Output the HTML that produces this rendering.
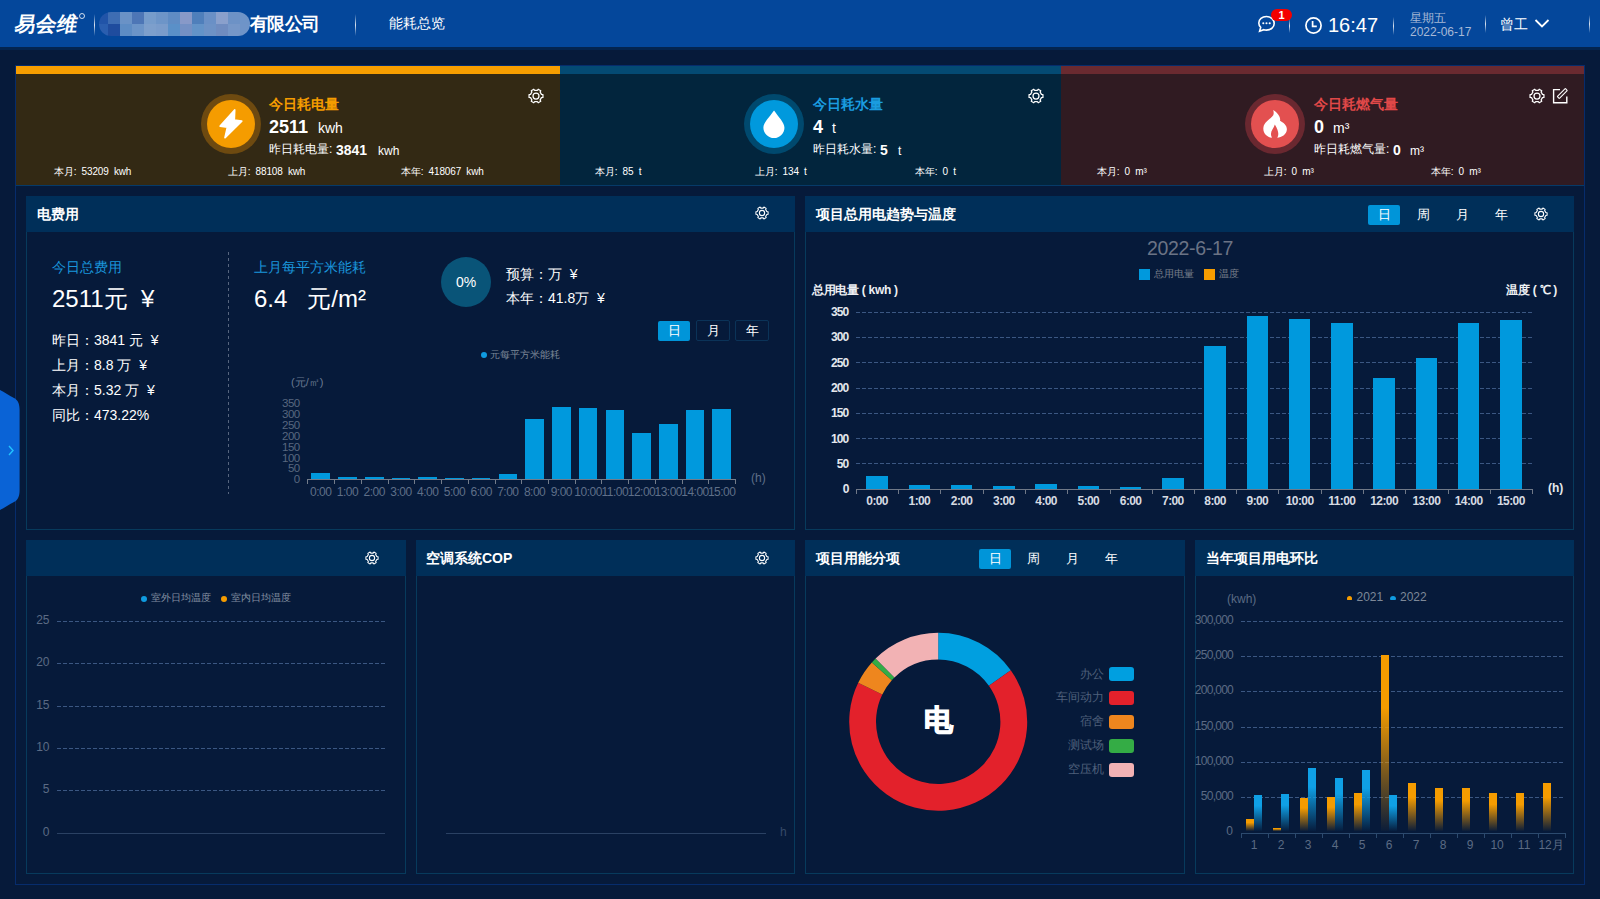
<!DOCTYPE html>
<html><head><meta charset="utf-8">
<style>
*{margin:0;padding:0;box-sizing:border-box}
html,body{width:1600px;height:899px;overflow:hidden;background:#061a3a;font-family:"Liberation Sans",sans-serif;color:#fff}
.a{position:absolute;white-space:nowrap}
.hdr{left:0;top:0;width:1600px;height:47px;background:#04479b}
.strip{left:0;top:47px;width:1600px;height:3px;background:#03244f}
.sep{width:1px;background:linear-gradient(to bottom,rgba(255,255,255,0),rgba(255,255,255,.85),rgba(255,255,255,0))}
.box{left:15px;top:65px;width:1570px;height:820px;border:1px solid #062c6c}
.card{top:66px;height:119px}
.bar{left:0;top:0;width:100%;height:8px}
.cbot{left:16px;top:185px;width:1568px;height:1px;background:#063a68}
.pnl{border:1px solid #073a5c;border-top:none}
.ph{left:-1px;top:0;height:36px;background:#002f59}
.pt{font-size:14px;font-weight:bold;color:#fff}
.g{color:#8390a3}
</style></head><body>
<!-- header -->
<div class="a hdr"></div>
<div class="a strip"></div>
<div class="a" style="left:15px;top:12px;font-size:20.5px;line-height:24px;font-weight:bold;color:#fff;letter-spacing:0px;transform:skewX(-10deg)">易会维</div>
<div class="a" style="left:79px;top:13px;width:6px;height:6px;border:1px solid rgba(255,255,255,.8);border-radius:50%"></div>
<div class="a sep" style="left:94px;top:14px;height:22px"></div>
<div class="a" style="left:99px;top:12px;width:151px;height:24px;border-radius:12px;overflow:hidden">
 <div style="display:grid;grid-template-columns:9px repeat(12,12px) 10px;grid-template-rows:12px 12px">
  <i style="background:#2154a8"></i><i style="background:#3e6db3"></i><i style="background:#6a92c6"></i><i style="background:#4d76b6"></i><i style="background:#769ccb"></i><i style="background:#6d95c8"></i><i style="background:#5f8cc4"></i><i style="background:#8899c8"></i><i style="background:#4f7fbb"></i><i style="background:#6a90c6"></i><i style="background:#8aa0cc"></i><i style="background:#6d92c6"></i><i style="background:#6e94c8"></i><i style="background:#6e94c8"></i>
  <i style="background:#2a5eaf"></i><i style="background:#1f4c9e"></i><i style="background:#5d8cc4"></i><i style="background:#6b94c8"></i><i style="background:#7d9fcc"></i><i style="background:#7a9ccb"></i><i style="background:#5a90c8"></i><i style="background:#7490c4"></i><i style="background:#6393c8"></i><i style="background:#6d92c6"></i><i style="background:#6f8cc0"></i><i style="background:#7697c8"></i><i style="background:#6f94c8"></i><i style="background:#6f94c8"></i>
 </div>
</div>
<div class="a" style="left:250px;top:12px;font-size:18px;line-height:24px;font-weight:bold;color:#fff;letter-spacing:-0.6px">有限公司</div>
<div class="a sep" style="left:355px;top:14px;height:22px"></div>
<div class="a" style="left:389px;top:14px;font-size:14px;line-height:18px;color:#fff">能耗总览</div>

<!-- header right -->
<svg class="a" style="left:1257px;top:15px" width="19" height="18" viewBox="0 0 19 18"><path d="M9.5 1.5C5 1.5 1.8 4.3 1.8 8c0 1.7.7 3.2 1.9 4.3L2.6 16.3l4.2-1.6c.9.3 1.8.4 2.7.4 4.5 0 7.7-2.9 7.7-6.6S14 1.5 9.5 1.5z" fill="none" stroke="#fff" stroke-width="1.6"/><circle cx="6.3" cy="8.2" r="1.05" fill="#fff"/><circle cx="9.5" cy="8.2" r="1.05" fill="#fff"/><circle cx="12.7" cy="8.2" r="1.05" fill="#fff"/></svg>
<div class="a" style="left:1271px;top:9px;width:21px;height:12px;border-radius:6px;background:#f40000;font-size:11px;line-height:12px;font-weight:bold;text-align:center;color:#fff">1</div>
<div class="a sep" style="left:1289px;top:19px;height:14px"></div>
<svg class="a" style="left:1304px;top:16px" width="19" height="19" viewBox="0 0 19 19"><circle cx="9.5" cy="9.5" r="7.6" fill="none" stroke="#fff" stroke-width="1.7"/><path d="M8.6 5v5.3h4.2" fill="none" stroke="#fff" stroke-width="1.7"/></svg>
<div class="a" style="left:1328px;top:13px;font-size:20px;line-height:24px;color:#fff">16:47</div>
<div class="a sep" style="left:1393px;top:17px;height:18px"></div>
<div class="a" style="left:1410px;top:11px;font-size:12px;line-height:14px;color:#a7b9d6">星期五</div>
<div class="a" style="left:1410px;top:26px;font-size:12px;line-height:13px;color:#a7b9d6">2022-06-17</div>
<div class="a sep" style="left:1485px;top:15px;height:18px"></div>
<div class="a" style="left:1500px;top:16px;font-size:14px;line-height:17px;color:#fff">曾工</div>
<svg class="a" style="left:1534px;top:18px" width="16" height="11" viewBox="0 0 16 11"><path d="M1.5 2l6.5 6.5 6.5-6.5" fill="none" stroke="#fff" stroke-width="1.8"/></svg>
<div class="a sep" style="left:1589px;top:15px;height:18px"></div>

<!-- container -->
<div class="a box"></div>

<!-- cards -->
<div class="a card" style="left:16px;width:544px;background:#332914"><div class="a bar" style="background:#f79e00"></div></div>
<div class="a card" style="left:560px;width:501px;background:#02253d"><div class="a bar" style="background:#044a73"></div></div>
<div class="a card" style="left:1061px;width:523px;background:#301b22"><div class="a bar" style="background:#6a2a30"></div></div>
<div class="a cbot"></div>
<svg width="0" height="0" style="position:absolute"><defs>
<symbol id="gear" viewBox="0 0 16 16"><path d="M9.30,2.45 L10.19,1.25 L12.75,2.72 L12.16,4.10 L13.46,6.35 L14.94,6.52 L14.94,9.48 L13.46,9.65 L12.16,11.90 L12.75,13.28 L10.19,14.75 L9.30,13.55 L6.70,13.55 L5.81,14.75 L3.25,13.28 L3.84,11.90 L2.54,9.65 L1.06,9.48 L1.06,6.52 L2.54,6.35 L3.84,4.10 L3.25,2.72 L5.81,1.25 L6.70,2.45Z" fill="none" stroke="#fff" stroke-width="1.25" stroke-linejoin="round"/><circle cx="8" cy="8" r="3" fill="none" stroke="#fff" stroke-width="1.25"/></symbol>
</defs></svg>

<!-- card 1 -->
<div class="a" style="left:201px;top:94px;width:60px;height:60px;border-radius:50%;background:#6e4a10"></div>
<div class="a" style="left:207px;top:100px;width:48px;height:48px;border-radius:50%;background:#f59c00"></div>
<svg class="a" style="left:195px;top:88px" width="70" height="72" viewBox="0 0 874 899"><path d="M495,275 L490,400 L583,415 L375,620 L405,490 L315,475 Z" fill="#fff" stroke="#fff" stroke-width="22" stroke-linejoin="round"/></svg>
<div class="a" style="left:269px;top:96px;font-size:14px;line-height:16px;font-weight:bold;color:#f59c00">今日耗电量</div>
<div class="a" style="left:269px;top:117px;font-size:18px;line-height:20px;font-weight:bold">2511</div>
<div class="a" style="left:318px;top:120px;font-size:14px;line-height:16px">kwh</div>
<div class="a" style="left:269px;top:142px;font-size:12px;line-height:14px">昨日耗电量:</div>
<div class="a" style="left:336px;top:142px;font-size:14px;line-height:16px;font-weight:bold">3841</div>
<div class="a" style="left:378px;top:144px;font-size:12px;line-height:14px">kwh</div>
<div class="a" style="left:54px;top:166px;font-size:10px;line-height:12px;letter-spacing:-0.15px">本月:&nbsp; 53209 &nbsp;kwh</div>
<div class="a" style="left:228px;top:166px;font-size:10px;line-height:12px;letter-spacing:-0.15px">上月:&nbsp; 88108 &nbsp;kwh</div>
<div class="a" style="left:401px;top:166px;font-size:10px;line-height:12px;letter-spacing:-0.15px">本年:&nbsp; 418067 &nbsp;kwh</div>
<svg class="a" style="left:528px;top:88px" width="16" height="16"><use href="#gear"/></svg>

<!-- card 2 -->
<div class="a" style="left:744px;top:94px;width:60px;height:60px;border-radius:50%;background:#00496e"></div>
<div class="a" style="left:750px;top:100px;width:48px;height:48px;border-radius:50%;background:#0099dd"></div>
<svg class="a" style="left:740px;top:88px" width="70" height="72" viewBox="0 0 874 899"><path d="M425,280 C480,360 555,430 555,495 C555,565 495,625 425,625 C355,625 292,565 292,495 C292,430 370,360 425,280 Z" fill="#fff"/></svg>
<div class="a" style="left:813px;top:96px;font-size:14px;line-height:16px;font-weight:bold;color:#1a9ce0">今日耗水量</div>
<div class="a" style="left:813px;top:117px;font-size:18px;line-height:20px;font-weight:bold">4</div>
<div class="a" style="left:832px;top:120px;font-size:14px;line-height:16px">t</div>
<div class="a" style="left:813px;top:142px;font-size:12px;line-height:14px">昨日耗水量:</div>
<div class="a" style="left:880px;top:142px;font-size:14px;line-height:16px;font-weight:bold">5</div>
<div class="a" style="left:898px;top:144px;font-size:12px;line-height:14px">t</div>
<div class="a" style="left:595px;top:166px;font-size:10px;line-height:12px;letter-spacing:-0.15px">本月:&nbsp; 85 &nbsp;t</div>
<div class="a" style="left:755px;top:166px;font-size:10px;line-height:12px;letter-spacing:-0.15px">上月:&nbsp; 134 &nbsp;t</div>
<div class="a" style="left:915px;top:166px;font-size:10px;line-height:12px;letter-spacing:-0.15px">本年:&nbsp; 0 &nbsp;t</div>
<svg class="a" style="left:1028px;top:88px" width="16" height="16"><use href="#gear"/></svg>

<!-- card 3 -->
<div class="a" style="left:1245px;top:94px;width:60px;height:60px;border-radius:50%;background:#6a2830"></div>
<div class="a" style="left:1251px;top:100px;width:48px;height:48px;border-radius:50%;background:#e35050"></div>
<svg class="a" style="left:1240px;top:88px" width="70" height="72" viewBox="0 0 874 899"><path d="M415,275 C470,310 510,360 500,410 C540,430 590,470 585,520 C580,580 520,615 465,622 C490,580 480,530 435,455 C420,510 360,550 400,622 C330,610 285,560 292,495 C300,420 380,390 415,340 C425,320 420,295 415,275 Z" fill="#fff"/></svg>
<div class="a" style="left:1314px;top:96px;font-size:14px;line-height:16px;font-weight:bold;color:#e04848">今日耗燃气量</div>
<div class="a" style="left:1314px;top:117px;font-size:18px;line-height:20px;font-weight:bold">0</div>
<div class="a" style="left:1333px;top:120px;font-size:14px;line-height:16px">m³</div>
<div class="a" style="left:1314px;top:142px;font-size:12px;line-height:14px">昨日耗燃气量:</div>
<div class="a" style="left:1393px;top:142px;font-size:14px;line-height:16px;font-weight:bold">0</div>
<div class="a" style="left:1410px;top:144px;font-size:12px;line-height:14px">m³</div>
<div class="a" style="left:1097px;top:166px;font-size:10px;line-height:12px;letter-spacing:-0.15px">本月:&nbsp; 0 &nbsp;m³</div>
<div class="a" style="left:1264px;top:166px;font-size:10px;line-height:12px;letter-spacing:-0.15px">上月:&nbsp; 0 &nbsp;m³</div>
<div class="a" style="left:1431px;top:166px;font-size:10px;line-height:12px;letter-spacing:-0.15px">本年:&nbsp; 0 &nbsp;m³</div>
<svg class="a" style="left:1529px;top:88px" width="16" height="16"><use href="#gear"/></svg>
<svg class="a" style="left:1552px;top:88px" width="16" height="16" viewBox="0 0 16 16"><path d="M8 1.6H1.6v13.2h13.2V8.4" fill="none" stroke="#fff" stroke-width="1.4"/><rect x="4.6" y="4.1" width="11.4" height="2.8" rx="0.6" transform="rotate(-45 10.3 5.5)" fill="none" stroke="#fff" stroke-width="1.1"/></svg>

<!-- panels -->
<div class="a pnl" style="left:26px;top:196px;width:769px;height:334px"><div class="a ph" style="width:769px"></div></div>
<div class="a pnl" style="left:805px;top:196px;width:769px;height:334px"><div class="a ph" style="width:769px"></div></div>
<div class="a pnl" style="left:26px;top:540px;width:380px;height:334px"><div class="a ph" style="width:380px"></div></div>
<div class="a pnl" style="left:416px;top:540px;width:379px;height:334px"><div class="a ph" style="width:379px"></div></div>
<div class="a pnl" style="left:805px;top:540px;width:380px;height:334px"><div class="a ph" style="width:380px"></div></div>
<div class="a pnl" style="left:1195px;top:540px;width:379px;height:334px"><div class="a ph" style="width:379px"></div></div>

<!--P1-->
<div class="a" style="left:37px;top:206px;font-size:14px;line-height:16px;color:#fff;font-weight:bold">电费用</div>
<svg class="a" style="left:755px;top:206px" width="14" height="14"><use href="#gear"/></svg>
<div class="a" style="left:52px;top:259px;font-size:14px;line-height:16px;color:#1a96dc;">今日总费用</div>
<div class="a" style="left:52px;top:285px;font-size:24px;line-height:28px;color:#fff;">2511元 &nbsp;¥</div>
<div class="a" style="left:52px;top:332px;font-size:14px;line-height:16px;color:#fff;">昨日：3841 元 &nbsp;¥</div>
<div class="a" style="left:52px;top:357px;font-size:14px;line-height:16px;color:#fff;">上月：8.8 万 &nbsp;¥</div>
<div class="a" style="left:52px;top:382px;font-size:14px;line-height:16px;color:#fff;">本月：5.32 万 &nbsp;¥</div>
<div class="a" style="left:52px;top:407px;font-size:14px;line-height:16px;color:#fff;">同比：473.22%</div>
<div class="a" style="left:228px;top:252px;width:1px;height:242px;background:repeating-linear-gradient(to bottom,#56657e 0 3px,transparent 3px 6px)"></div>
<div class="a" style="left:254px;top:259px;font-size:14px;line-height:16px;color:#1a96dc;">上月每平方米能耗</div>
<div class="a" style="left:254px;top:285px;font-size:24px;line-height:28px;color:#fff;">6.4 &nbsp; 元/m²</div>
<div class="a" style="left:441px;top:257px;width:50px;height:50px;border-radius:50%;background:#095478"></div>
<div class="a" style="left:366px;width:200px;text-align:center;top:274px;font-size:14px;line-height:16px;color:#fff;">0%</div>
<div class="a" style="left:506px;top:266px;font-size:14px;line-height:16px;color:#fff;">预算：万 &nbsp;¥</div>
<div class="a" style="left:506px;top:290px;font-size:14px;line-height:16px;color:#fff;">本年：41.8万 &nbsp;¥</div>
<div class="a" style="left:658px;top:321px;width:32px;height:20px;background:#0095d9;border-radius:2px;font-size:13px;line-height:20px;text-align:center">日</div>
<div class="a" style="left:696px;top:320px;width:34px;height:21px;border:1px solid #0b3358;border-radius:2px;font-size:13px;line-height:19px;text-align:center">月</div>
<div class="a" style="left:735px;top:320px;width:34px;height:21px;border:1px solid #0b3358;border-radius:2px;font-size:13px;line-height:19px;text-align:center">年</div>
<!--/P1-->
<!--C1-->
<div class="a" style="left:291px;top:376px;font-size:11px;line-height:13px;color:#6b7a92;">(元/㎡)</div>
<div class="a" style="left:481px;top:352px;width:6px;height:6px;border-radius:50%;background:#0f9be0"></div>
<div class="a" style="left:490px;top:348px;font-size:10px;line-height:13px;color:#7d8898;">元每平方米能耗</div>
<div class="a" style="left:99.5px;width:200px;text-align:right;top:397.3px;font-size:11.5px;line-height:13px;color:#58677f;letter-spacing:-0.6px">350</div>
<div class="a" style="left:99.5px;width:200px;text-align:right;top:408.15714285714284px;font-size:11.5px;line-height:13px;color:#58677f;letter-spacing:-0.6px">300</div>
<div class="a" style="left:99.5px;width:200px;text-align:right;top:419.01428571428573px;font-size:11.5px;line-height:13px;color:#58677f;letter-spacing:-0.6px">250</div>
<div class="a" style="left:99.5px;width:200px;text-align:right;top:429.87142857142857px;font-size:11.5px;line-height:13px;color:#58677f;letter-spacing:-0.6px">200</div>
<div class="a" style="left:99.5px;width:200px;text-align:right;top:440.72857142857146px;font-size:11.5px;line-height:13px;color:#58677f;letter-spacing:-0.6px">150</div>
<div class="a" style="left:99.5px;width:200px;text-align:right;top:451.5857142857143px;font-size:11.5px;line-height:13px;color:#58677f;letter-spacing:-0.6px">100</div>
<div class="a" style="left:99.5px;width:200px;text-align:right;top:462.4428571428572px;font-size:11.5px;line-height:13px;color:#58677f;letter-spacing:-0.6px">50</div>
<div class="a" style="left:99.5px;width:200px;text-align:right;top:473.3px;font-size:11.5px;line-height:13px;color:#58677f;letter-spacing:-0.6px">0</div>
<div class="a" style="left:307.40px;top:479.00px;width:427.68px;height:1.00px;background:#737c8a;"></div>
<div class="a" style="left:307.00px;top:479.00px;width:1.00px;height:5.00px;background:#737c8a;"></div>
<div class="a" style="left:334.00px;top:479.00px;width:1.00px;height:5.00px;background:#737c8a;"></div>
<div class="a" style="left:361.00px;top:479.00px;width:1.00px;height:5.00px;background:#737c8a;"></div>
<div class="a" style="left:388.00px;top:479.00px;width:1.00px;height:5.00px;background:#737c8a;"></div>
<div class="a" style="left:414.00px;top:479.00px;width:1.00px;height:5.00px;background:#737c8a;"></div>
<div class="a" style="left:441.00px;top:479.00px;width:1.00px;height:5.00px;background:#737c8a;"></div>
<div class="a" style="left:468.00px;top:479.00px;width:1.00px;height:5.00px;background:#737c8a;"></div>
<div class="a" style="left:495.00px;top:479.00px;width:1.00px;height:5.00px;background:#737c8a;"></div>
<div class="a" style="left:521.00px;top:479.00px;width:1.00px;height:5.00px;background:#737c8a;"></div>
<div class="a" style="left:548.00px;top:479.00px;width:1.00px;height:5.00px;background:#737c8a;"></div>
<div class="a" style="left:575.00px;top:479.00px;width:1.00px;height:5.00px;background:#737c8a;"></div>
<div class="a" style="left:601.00px;top:479.00px;width:1.00px;height:5.00px;background:#737c8a;"></div>
<div class="a" style="left:628.00px;top:479.00px;width:1.00px;height:5.00px;background:#737c8a;"></div>
<div class="a" style="left:655.00px;top:479.00px;width:1.00px;height:5.00px;background:#737c8a;"></div>
<div class="a" style="left:682.00px;top:479.00px;width:1.00px;height:5.00px;background:#737c8a;"></div>
<div class="a" style="left:708.00px;top:479.00px;width:1.00px;height:5.00px;background:#737c8a;"></div>
<div class="a" style="left:735.00px;top:479.00px;width:1.00px;height:5.00px;background:#737c8a;"></div>
<div class="a" style="left:311.46px;top:473.00px;width:18.60px;height:6.00px;background:#0099dd;"></div>
<div class="a" style="left:220.765px;width:200px;text-align:center;top:484.5px;font-size:12px;line-height:14px;color:#5f6f88;letter-spacing:-0.5px">0:00</div>
<div class="a" style="left:338.19px;top:476.80px;width:18.60px;height:2.20px;background:#0099dd;"></div>
<div class="a" style="left:247.495px;width:200px;text-align:center;top:484.5px;font-size:12px;line-height:14px;color:#5f6f88;letter-spacing:-0.5px">1:00</div>
<div class="a" style="left:364.92px;top:476.80px;width:18.60px;height:2.20px;background:#0099dd;"></div>
<div class="a" style="left:274.22499999999997px;width:200px;text-align:center;top:484.5px;font-size:12px;line-height:14px;color:#5f6f88;letter-spacing:-0.5px">2:00</div>
<div class="a" style="left:391.65px;top:477.60px;width:18.60px;height:1.40px;background:#0099dd;"></div>
<div class="a" style="left:300.955px;width:200px;text-align:center;top:484.5px;font-size:12px;line-height:14px;color:#5f6f88;letter-spacing:-0.5px">3:00</div>
<div class="a" style="left:418.38px;top:476.80px;width:18.60px;height:2.20px;background:#0099dd;"></div>
<div class="a" style="left:327.68499999999995px;width:200px;text-align:center;top:484.5px;font-size:12px;line-height:14px;color:#5f6f88;letter-spacing:-0.5px">4:00</div>
<div class="a" style="left:445.11px;top:477.60px;width:18.60px;height:1.40px;background:#0099dd;"></div>
<div class="a" style="left:354.41499999999996px;width:200px;text-align:center;top:484.5px;font-size:12px;line-height:14px;color:#5f6f88;letter-spacing:-0.5px">5:00</div>
<div class="a" style="left:471.84px;top:477.90px;width:18.60px;height:1.10px;background:#0099dd;"></div>
<div class="a" style="left:381.145px;width:200px;text-align:center;top:484.5px;font-size:12px;line-height:14px;color:#5f6f88;letter-spacing:-0.5px">6:00</div>
<div class="a" style="left:498.57px;top:474.30px;width:18.60px;height:4.70px;background:#0099dd;"></div>
<div class="a" style="left:407.875px;width:200px;text-align:center;top:484.5px;font-size:12px;line-height:14px;color:#5f6f88;letter-spacing:-0.5px">7:00</div>
<div class="a" style="left:525.31px;top:419.00px;width:18.60px;height:60.00px;background:#0099dd;"></div>
<div class="a" style="left:434.605px;width:200px;text-align:center;top:484.5px;font-size:12px;line-height:14px;color:#5f6f88;letter-spacing:-0.5px">8:00</div>
<div class="a" style="left:552.04px;top:407.00px;width:18.60px;height:72.00px;background:#0099dd;"></div>
<div class="a" style="left:461.33500000000004px;width:200px;text-align:center;top:484.5px;font-size:12px;line-height:14px;color:#5f6f88;letter-spacing:-0.5px">9:00</div>
<div class="a" style="left:578.77px;top:408.00px;width:18.60px;height:71.00px;background:#0099dd;"></div>
<div class="a" style="left:488.06500000000005px;width:200px;text-align:center;top:484.5px;font-size:12px;line-height:14px;color:#5f6f88;letter-spacing:-0.5px">10:00</div>
<div class="a" style="left:605.50px;top:409.70px;width:18.60px;height:69.30px;background:#0099dd;"></div>
<div class="a" style="left:514.795px;width:200px;text-align:center;top:484.5px;font-size:12px;line-height:14px;color:#5f6f88;letter-spacing:-0.5px">11:00</div>
<div class="a" style="left:632.23px;top:432.60px;width:18.60px;height:46.40px;background:#0099dd;"></div>
<div class="a" style="left:541.525px;width:200px;text-align:center;top:484.5px;font-size:12px;line-height:14px;color:#5f6f88;letter-spacing:-0.5px">12:00</div>
<div class="a" style="left:658.96px;top:424.00px;width:18.60px;height:55.00px;background:#0099dd;"></div>
<div class="a" style="left:568.255px;width:200px;text-align:center;top:484.5px;font-size:12px;line-height:14px;color:#5f6f88;letter-spacing:-0.5px">13:00</div>
<div class="a" style="left:685.68px;top:409.70px;width:18.60px;height:69.30px;background:#0099dd;"></div>
<div class="a" style="left:594.9849999999999px;width:200px;text-align:center;top:484.5px;font-size:12px;line-height:14px;color:#5f6f88;letter-spacing:-0.5px">14:00</div>
<div class="a" style="left:712.41px;top:408.50px;width:18.60px;height:70.50px;background:#0099dd;"></div>
<div class="a" style="left:621.7149999999999px;width:200px;text-align:center;top:484.5px;font-size:12px;line-height:14px;color:#5f6f88;letter-spacing:-0.5px">15:00</div>
<div class="a" style="left:751px;top:471px;font-size:12px;line-height:14px;color:#5f6f88;">(h)</div>
<!--/C1-->
<!--C2-->
<div class="a" style="left:816px;top:206px;font-size:14px;line-height:16px;color:#fff;font-weight:bold">项目总用电趋势与温度</div>
<div class="a" style="left:1368px;top:205px;width:32px;height:20px;background:#0095d9;border-radius:2px;font-size:13px;line-height:20px;text-align:center">日</div>
<div class="a" style="left:1323px;width:200px;text-align:center;top:205px;font-size:13px;line-height:20px;color:#fff;">周</div>
<div class="a" style="left:1362px;width:200px;text-align:center;top:205px;font-size:13px;line-height:20px;color:#fff;">月</div>
<div class="a" style="left:1401px;width:200px;text-align:center;top:205px;font-size:13px;line-height:20px;color:#fff;">年</div>
<svg class="a" style="left:1534px;top:207px" width="14" height="14"><use href="#gear"/></svg>
<div class="a" style="left:1090px;width:200px;text-align:center;top:237px;font-size:19.5px;line-height:22px;color:#6b7385;letter-spacing:-0.3px">2022-6-17</div>
<div class="a" style="left:1139.00px;top:269.00px;width:11.00px;height:11.00px;background:#0099dd;"></div>
<div class="a" style="left:1154px;top:267px;font-size:10px;line-height:13px;color:#7a808c;">总用电量</div>
<div class="a" style="left:1204.00px;top:269.00px;width:11.00px;height:11.00px;background:#f59c00;"></div>
<div class="a" style="left:1219px;top:267px;font-size:10px;line-height:13px;color:#7a808c;">温度</div>
<div class="a" style="left:812px;top:283px;font-size:12px;line-height:14px;color:#eef0f3;font-weight:bold;letter-spacing:-0.3px">总用电量 ( kwh )</div>
<div class="a" style="left:1357px;width:200px;text-align:right;top:283px;font-size:12px;line-height:14px;color:#eef0f3;font-weight:bold;letter-spacing:-0.3px">温度 ( ℃ )</div>
<div class="a" style="left:856px;top:312px;width:676px;height:1px;background:repeating-linear-gradient(to right,#3b5782 0 4px,transparent 4px 6px)"></div>
<div class="a" style="left:856px;top:337px;width:676px;height:1px;background:repeating-linear-gradient(to right,#3b5782 0 4px,transparent 4px 6px)"></div>
<div class="a" style="left:856px;top:362px;width:676px;height:1px;background:repeating-linear-gradient(to right,#3b5782 0 4px,transparent 4px 6px)"></div>
<div class="a" style="left:856px;top:388px;width:676px;height:1px;background:repeating-linear-gradient(to right,#3b5782 0 4px,transparent 4px 6px)"></div>
<div class="a" style="left:856px;top:413px;width:676px;height:1px;background:repeating-linear-gradient(to right,#3b5782 0 4px,transparent 4px 6px)"></div>
<div class="a" style="left:856px;top:438px;width:676px;height:1px;background:repeating-linear-gradient(to right,#3b5782 0 4px,transparent 4px 6px)"></div>
<div class="a" style="left:856px;top:463px;width:676px;height:1px;background:repeating-linear-gradient(to right,#3b5782 0 4px,transparent 4px 6px)"></div>
<div class="a" style="left:648.5px;width:200px;text-align:right;top:304.8px;font-size:12px;line-height:14px;color:#e3e7ec;font-weight:bold;letter-spacing:-0.8px">350</div>
<div class="a" style="left:648.5px;width:200px;text-align:right;top:330.15714285714284px;font-size:12px;line-height:14px;color:#e3e7ec;font-weight:bold;letter-spacing:-0.8px">300</div>
<div class="a" style="left:648.5px;width:200px;text-align:right;top:355.51428571428573px;font-size:12px;line-height:14px;color:#e3e7ec;font-weight:bold;letter-spacing:-0.8px">250</div>
<div class="a" style="left:648.5px;width:200px;text-align:right;top:380.8714285714286px;font-size:12px;line-height:14px;color:#e3e7ec;font-weight:bold;letter-spacing:-0.8px">200</div>
<div class="a" style="left:648.5px;width:200px;text-align:right;top:406.22857142857146px;font-size:12px;line-height:14px;color:#e3e7ec;font-weight:bold;letter-spacing:-0.8px">150</div>
<div class="a" style="left:648.5px;width:200px;text-align:right;top:431.5857142857143px;font-size:12px;line-height:14px;color:#e3e7ec;font-weight:bold;letter-spacing:-0.8px">100</div>
<div class="a" style="left:648.5px;width:200px;text-align:right;top:456.9428571428572px;font-size:12px;line-height:14px;color:#e3e7ec;font-weight:bold;letter-spacing:-0.8px">50</div>
<div class="a" style="left:648.5px;width:200px;text-align:right;top:482.3px;font-size:12px;line-height:14px;color:#e3e7ec;font-weight:bold;letter-spacing:-0.8px">0</div>
<div class="a" style="left:856.00px;top:489.00px;width:676.00px;height:1.00px;background:#6f7887;"></div>
<div class="a" style="left:856.00px;top:489.00px;width:1.00px;height:5.00px;background:#6f7887;"></div>
<div class="a" style="left:898.00px;top:489.00px;width:1.00px;height:5.00px;background:#6f7887;"></div>
<div class="a" style="left:940.00px;top:489.00px;width:1.00px;height:5.00px;background:#6f7887;"></div>
<div class="a" style="left:983.00px;top:489.00px;width:1.00px;height:5.00px;background:#6f7887;"></div>
<div class="a" style="left:1025.00px;top:489.00px;width:1.00px;height:5.00px;background:#6f7887;"></div>
<div class="a" style="left:1067.00px;top:489.00px;width:1.00px;height:5.00px;background:#6f7887;"></div>
<div class="a" style="left:1110.00px;top:489.00px;width:1.00px;height:5.00px;background:#6f7887;"></div>
<div class="a" style="left:1152.00px;top:489.00px;width:1.00px;height:5.00px;background:#6f7887;"></div>
<div class="a" style="left:1194.00px;top:489.00px;width:1.00px;height:5.00px;background:#6f7887;"></div>
<div class="a" style="left:1236.00px;top:489.00px;width:1.00px;height:5.00px;background:#6f7887;"></div>
<div class="a" style="left:1278.00px;top:489.00px;width:1.00px;height:5.00px;background:#6f7887;"></div>
<div class="a" style="left:1321.00px;top:489.00px;width:1.00px;height:5.00px;background:#6f7887;"></div>
<div class="a" style="left:1363.00px;top:489.00px;width:1.00px;height:5.00px;background:#6f7887;"></div>
<div class="a" style="left:1405.00px;top:489.00px;width:1.00px;height:5.00px;background:#6f7887;"></div>
<div class="a" style="left:1448.00px;top:489.00px;width:1.00px;height:5.00px;background:#6f7887;"></div>
<div class="a" style="left:1490.00px;top:489.00px;width:1.00px;height:5.00px;background:#6f7887;"></div>
<div class="a" style="left:1532.00px;top:489.00px;width:1.00px;height:5.00px;background:#6f7887;"></div>
<div class="a" style="left:866.48px;top:475.75px;width:21.30px;height:13.25px;background:#0099dd;"></div>
<div class="a" style="left:777.125px;width:200px;text-align:center;top:494px;font-size:12px;line-height:14px;color:#d6dbe2;font-weight:bold;letter-spacing:-0.6px">0:00</div>
<div class="a" style="left:908.73px;top:485.20px;width:21.30px;height:3.80px;background:#0099dd;"></div>
<div class="a" style="left:819.375px;width:200px;text-align:center;top:494px;font-size:12px;line-height:14px;color:#d6dbe2;font-weight:bold;letter-spacing:-0.6px">1:00</div>
<div class="a" style="left:950.98px;top:485.20px;width:21.30px;height:3.80px;background:#0099dd;"></div>
<div class="a" style="left:861.625px;width:200px;text-align:center;top:494px;font-size:12px;line-height:14px;color:#d6dbe2;font-weight:bold;letter-spacing:-0.6px">2:00</div>
<div class="a" style="left:993.23px;top:486.00px;width:21.30px;height:3.00px;background:#0099dd;"></div>
<div class="a" style="left:903.875px;width:200px;text-align:center;top:494px;font-size:12px;line-height:14px;color:#d6dbe2;font-weight:bold;letter-spacing:-0.6px">3:00</div>
<div class="a" style="left:1035.47px;top:484.00px;width:21.30px;height:5.00px;background:#0099dd;"></div>
<div class="a" style="left:946.125px;width:200px;text-align:center;top:494px;font-size:12px;line-height:14px;color:#d6dbe2;font-weight:bold;letter-spacing:-0.6px">4:00</div>
<div class="a" style="left:1077.72px;top:486.00px;width:21.30px;height:3.00px;background:#0099dd;"></div>
<div class="a" style="left:988.375px;width:200px;text-align:center;top:494px;font-size:12px;line-height:14px;color:#d6dbe2;font-weight:bold;letter-spacing:-0.6px">5:00</div>
<div class="a" style="left:1119.97px;top:486.90px;width:21.30px;height:2.10px;background:#0099dd;"></div>
<div class="a" style="left:1030.625px;width:200px;text-align:center;top:494px;font-size:12px;line-height:14px;color:#d6dbe2;font-weight:bold;letter-spacing:-0.6px">6:00</div>
<div class="a" style="left:1162.22px;top:478.00px;width:21.30px;height:11.00px;background:#0099dd;"></div>
<div class="a" style="left:1072.875px;width:200px;text-align:center;top:494px;font-size:12px;line-height:14px;color:#d6dbe2;font-weight:bold;letter-spacing:-0.6px">7:00</div>
<div class="a" style="left:1204.47px;top:345.70px;width:21.30px;height:143.30px;background:#0099dd;"></div>
<div class="a" style="left:1115.125px;width:200px;text-align:center;top:494px;font-size:12px;line-height:14px;color:#d6dbe2;font-weight:bold;letter-spacing:-0.6px">8:00</div>
<div class="a" style="left:1246.72px;top:316.20px;width:21.30px;height:172.80px;background:#0099dd;"></div>
<div class="a" style="left:1157.375px;width:200px;text-align:center;top:494px;font-size:12px;line-height:14px;color:#d6dbe2;font-weight:bold;letter-spacing:-0.6px">9:00</div>
<div class="a" style="left:1288.97px;top:318.90px;width:21.30px;height:170.10px;background:#0099dd;"></div>
<div class="a" style="left:1199.625px;width:200px;text-align:center;top:494px;font-size:12px;line-height:14px;color:#d6dbe2;font-weight:bold;letter-spacing:-0.6px">10:00</div>
<div class="a" style="left:1331.22px;top:322.70px;width:21.30px;height:166.30px;background:#0099dd;"></div>
<div class="a" style="left:1241.875px;width:200px;text-align:center;top:494px;font-size:12px;line-height:14px;color:#d6dbe2;font-weight:bold;letter-spacing:-0.6px">11:00</div>
<div class="a" style="left:1373.47px;top:378.00px;width:21.30px;height:111.00px;background:#0099dd;"></div>
<div class="a" style="left:1284.125px;width:200px;text-align:center;top:494px;font-size:12px;line-height:14px;color:#d6dbe2;font-weight:bold;letter-spacing:-0.6px">12:00</div>
<div class="a" style="left:1415.72px;top:357.80px;width:21.30px;height:131.20px;background:#0099dd;"></div>
<div class="a" style="left:1326.375px;width:200px;text-align:center;top:494px;font-size:12px;line-height:14px;color:#d6dbe2;font-weight:bold;letter-spacing:-0.6px">13:00</div>
<div class="a" style="left:1457.97px;top:322.70px;width:21.30px;height:166.30px;background:#0099dd;"></div>
<div class="a" style="left:1368.625px;width:200px;text-align:center;top:494px;font-size:12px;line-height:14px;color:#d6dbe2;font-weight:bold;letter-spacing:-0.6px">14:00</div>
<div class="a" style="left:1500.22px;top:320.40px;width:21.30px;height:168.60px;background:#0099dd;"></div>
<div class="a" style="left:1410.875px;width:200px;text-align:center;top:494px;font-size:12px;line-height:14px;color:#d6dbe2;font-weight:bold;letter-spacing:-0.6px">15:00</div>
<div class="a" style="left:1548px;top:481px;font-size:12px;line-height:14px;color:#e3e7ec;font-weight:bold">(h)</div>
<!--/C2-->
<!--P3-->
<svg class="a" style="left:365px;top:551px" width="14" height="14"><use href="#gear"/></svg>
<div class="a" style="left:140.5px;top:595.5px;width:6px;height:6px;border-radius:50%;background:#0f9be0"></div>
<div class="a" style="left:151px;top:591px;font-size:10px;line-height:13px;color:#8591a2;">室外日均温度</div>
<div class="a" style="left:220.5px;top:595.5px;width:6px;height:6px;border-radius:50%;background:#f59c00"></div>
<div class="a" style="left:231px;top:591px;font-size:10px;line-height:13px;color:#8591a2;">室内日均温度</div>
<div class="a" style="left:57px;top:621.0px;width:328px;height:1px;background:repeating-linear-gradient(to right,#3b5782 0 4px,transparent 4px 6px)"></div>
<div class="a" style="left:-150.5px;width:200px;text-align:right;top:613px;font-size:12px;line-height:14px;color:#5b6b84;">25</div>
<div class="a" style="left:57px;top:663.3px;width:328px;height:1px;background:repeating-linear-gradient(to right,#3b5782 0 4px,transparent 4px 6px)"></div>
<div class="a" style="left:-150.5px;width:200px;text-align:right;top:655.3px;font-size:12px;line-height:14px;color:#5b6b84;">20</div>
<div class="a" style="left:57px;top:705.6px;width:328px;height:1px;background:repeating-linear-gradient(to right,#3b5782 0 4px,transparent 4px 6px)"></div>
<div class="a" style="left:-150.5px;width:200px;text-align:right;top:697.6px;font-size:12px;line-height:14px;color:#5b6b84;">15</div>
<div class="a" style="left:57px;top:748.0px;width:328px;height:1px;background:repeating-linear-gradient(to right,#3b5782 0 4px,transparent 4px 6px)"></div>
<div class="a" style="left:-150.5px;width:200px;text-align:right;top:740px;font-size:12px;line-height:14px;color:#5b6b84;">10</div>
<div class="a" style="left:57px;top:790.3px;width:328px;height:1px;background:repeating-linear-gradient(to right,#3b5782 0 4px,transparent 4px 6px)"></div>
<div class="a" style="left:-150.5px;width:200px;text-align:right;top:782.3px;font-size:12px;line-height:14px;color:#5b6b84;">5</div>
<div class="a" style="left:57.00px;top:832.50px;width:328.00px;height:1.00px;background:#2a4163;"></div>
<div class="a" style="left:-150.5px;width:200px;text-align:right;top:825px;font-size:12px;line-height:14px;color:#5b6b84;">0</div>
<!--/P3-->
<!--C3-->
<div class="a" style="left:426px;top:550px;font-size:14px;line-height:16px;color:#fff;font-weight:bold">空调系统COP</div>
<svg class="a" style="left:755px;top:551px" width="14" height="14"><use href="#gear"/></svg>
<div class="a" style="left:446.00px;top:833.00px;width:319.50px;height:1.00px;background:#2a4163;"></div>
<div class="a" style="left:780px;top:825px;font-size:12px;line-height:14px;color:#354a69;">h</div>
<!--/C3-->
<!--C4-->
<div class="a" style="left:816px;top:550px;font-size:14px;line-height:16px;color:#fff;font-weight:bold">项目用能分项</div>
<div class="a" style="left:979px;top:549px;width:32px;height:20px;background:#0095d9;border-radius:2px;font-size:13px;line-height:20px;text-align:center">日</div>
<div class="a" style="left:933px;width:200px;text-align:center;top:549px;font-size:13px;line-height:20px;color:#fff;">周</div>
<div class="a" style="left:972px;width:200px;text-align:center;top:549px;font-size:13px;line-height:20px;color:#fff;">月</div>
<div class="a" style="left:1011px;width:200px;text-align:center;top:549px;font-size:13px;line-height:20px;color:#fff;">年</div>
<svg class="a" style="left:800px;top:620px" width="250" height="210"><path d="M138.20,12.80 A89,89 0 0 1 210.75,50.24 L188.90,65.77 A62.2,62.2 0 0 0 138.20,39.60 Z" fill="#009fe0"/><path d="M210.75,50.24 A89,89 0 1 1 58.21,62.78 L82.30,74.53 A62.2,62.2 0 1 0 188.90,65.77 Z" fill="#e3212b"/><path d="M58.21,62.78 A89,89 0 0 1 71.85,42.48 L91.83,60.34 A62.2,62.2 0 0 0 82.30,74.53 Z" fill="#ee861e"/><path d="M71.85,42.48 A89,89 0 0 1 75.60,38.54 L94.45,57.59 A62.2,62.2 0 0 0 91.83,60.34 Z" fill="#34ac45"/><path d="M75.60,38.54 A89,89 0 0 1 138.20,12.80 L138.20,39.60 A62.2,62.2 0 0 0 94.45,57.59 Z" fill="#f2b2b4"/></svg>
<div class="a" style="left:838.5px;width:200px;text-align:center;top:702px;font-size:29px;line-height:36px;color:#fff;font-weight:900;-webkit-text-stroke:1.2px #fff">电</div>
<div class="a" style="left:1109.00px;top:667.00px;width:25.00px;height:14.20px;background:#009fe0;border-radius:3px"></div>
<div class="a" style="left:904px;width:200px;text-align:right;top:666.5px;font-size:12px;line-height:15px;color:#4f607a;">办公</div>
<div class="a" style="left:1109.00px;top:690.95px;width:25.00px;height:14.20px;background:#e3212b;border-radius:3px"></div>
<div class="a" style="left:904px;width:200px;text-align:right;top:690.45px;font-size:12px;line-height:15px;color:#4f607a;">车间动力</div>
<div class="a" style="left:1109.00px;top:714.90px;width:25.00px;height:14.20px;background:#ee861e;border-radius:3px"></div>
<div class="a" style="left:904px;width:200px;text-align:right;top:714.4px;font-size:12px;line-height:15px;color:#4f607a;">宿舍</div>
<div class="a" style="left:1109.00px;top:738.85px;width:25.00px;height:14.20px;background:#34ac45;border-radius:3px"></div>
<div class="a" style="left:904px;width:200px;text-align:right;top:738.35px;font-size:12px;line-height:15px;color:#4f607a;">测试场</div>
<div class="a" style="left:1109.00px;top:762.80px;width:25.00px;height:14.20px;background:#f2b2b4;border-radius:3px"></div>
<div class="a" style="left:904px;width:200px;text-align:right;top:762.3px;font-size:12px;line-height:15px;color:#4f607a;">空压机</div>
<!--/C4-->
<!--C5-->
<div class="a" style="left:1206px;top:550px;font-size:14px;line-height:16px;color:#fff;font-weight:bold">当年项目用电环比</div>
<div class="a" style="left:1227px;top:592px;font-size:12px;line-height:15px;color:#5b6b84;">(kwh)</div>
<div class="a" style="left:1346.50px;top:595.50px;width:5.50px;height:4.50px;background:#f59c00;border-radius:3px 3px 1px 1px"></div>
<div class="a" style="left:1356.5px;top:590px;font-size:12px;line-height:15px;color:#7d8898;">2021</div>
<div class="a" style="left:1390.00px;top:595.50px;width:5.50px;height:4.50px;background:#0f9be0;border-radius:3px 3px 1px 1px"></div>
<div class="a" style="left:1400px;top:590px;font-size:12px;line-height:15px;color:#7d8898;">2022</div>
<div class="a" style="left:1241px;top:621px;width:322px;height:1px;background:repeating-linear-gradient(to right,#3b5782 0 4px,transparent 4px 6px)"></div>
<div class="a" style="left:1033px;width:200px;text-align:right;top:612.9px;font-size:12px;line-height:15px;color:#5b6b84;letter-spacing:-0.75px">300,000</div>
<div class="a" style="left:1241px;top:656px;width:322px;height:1px;background:repeating-linear-gradient(to right,#3b5782 0 4px,transparent 4px 6px)"></div>
<div class="a" style="left:1033px;width:200px;text-align:right;top:648.1px;font-size:12px;line-height:15px;color:#5b6b84;letter-spacing:-0.75px">250,000</div>
<div class="a" style="left:1241px;top:691px;width:322px;height:1px;background:repeating-linear-gradient(to right,#3b5782 0 4px,transparent 4px 6px)"></div>
<div class="a" style="left:1033px;width:200px;text-align:right;top:683.3px;font-size:12px;line-height:15px;color:#5b6b84;letter-spacing:-0.75px">200,000</div>
<div class="a" style="left:1241px;top:727px;width:322px;height:1px;background:repeating-linear-gradient(to right,#3b5782 0 4px,transparent 4px 6px)"></div>
<div class="a" style="left:1033px;width:200px;text-align:right;top:718.5px;font-size:12px;line-height:15px;color:#5b6b84;letter-spacing:-0.75px">150,000</div>
<div class="a" style="left:1241px;top:762px;width:322px;height:1px;background:repeating-linear-gradient(to right,#3b5782 0 4px,transparent 4px 6px)"></div>
<div class="a" style="left:1033px;width:200px;text-align:right;top:753.7px;font-size:12px;line-height:15px;color:#5b6b84;letter-spacing:-0.75px">100,000</div>
<div class="a" style="left:1241px;top:797px;width:322px;height:1px;background:repeating-linear-gradient(to right,#3b5782 0 4px,transparent 4px 6px)"></div>
<div class="a" style="left:1033px;width:200px;text-align:right;top:788.9px;font-size:12px;line-height:15px;color:#5b6b84;letter-spacing:-0.75px">50,000</div>
<div class="a" style="left:1033px;width:200px;text-align:right;top:824.1px;font-size:12px;line-height:15px;color:#5b6b84;">0</div>
<div class="a" style="left:1240.60px;top:833.00px;width:324.00px;height:1.00px;background:#2c4a6e;"></div>
<div class="a" style="left:1241.00px;top:833.00px;width:1.00px;height:5.00px;background:#2c4a6e;"></div>
<div class="a" style="left:1268.00px;top:833.00px;width:1.00px;height:5.00px;background:#2c4a6e;"></div>
<div class="a" style="left:1295.00px;top:833.00px;width:1.00px;height:5.00px;background:#2c4a6e;"></div>
<div class="a" style="left:1322.00px;top:833.00px;width:1.00px;height:5.00px;background:#2c4a6e;"></div>
<div class="a" style="left:1349.00px;top:833.00px;width:1.00px;height:5.00px;background:#2c4a6e;"></div>
<div class="a" style="left:1376.00px;top:833.00px;width:1.00px;height:5.00px;background:#2c4a6e;"></div>
<div class="a" style="left:1403.00px;top:833.00px;width:1.00px;height:5.00px;background:#2c4a6e;"></div>
<div class="a" style="left:1430.00px;top:833.00px;width:1.00px;height:5.00px;background:#2c4a6e;"></div>
<div class="a" style="left:1457.00px;top:833.00px;width:1.00px;height:5.00px;background:#2c4a6e;"></div>
<div class="a" style="left:1484.00px;top:833.00px;width:1.00px;height:5.00px;background:#2c4a6e;"></div>
<div class="a" style="left:1511.00px;top:833.00px;width:1.00px;height:5.00px;background:#2c4a6e;"></div>
<div class="a" style="left:1538.00px;top:833.00px;width:1.00px;height:5.00px;background:#2c4a6e;"></div>
<div class="a" style="left:1565.00px;top:833.00px;width:1.00px;height:5.00px;background:#2c4a6e;"></div>
<div class="a" style="left:1245.90px;top:819.00px;width:8.20px;height:12.00px;background:linear-gradient(to bottom,#f59c00 0%,#f59c00 30%,rgba(245,156,0,0.02) 100%);"></div>
<div class="a" style="left:1254.10px;top:794.80px;width:8.20px;height:36.20px;background:linear-gradient(to bottom,#0fa0e6 0%,#0fa0e6 30%,rgba(15,160,230,0.02) 100%);"></div>
<div class="a" style="left:1154.1px;width:200px;text-align:center;top:838px;font-size:12px;line-height:15px;color:#5b6b84;">1</div>
<div class="a" style="left:1272.90px;top:827.80px;width:8.20px;height:3.20px;background:linear-gradient(to bottom,#f59c00 0%,#f59c00 30%,rgba(245,156,0,0.02) 100%);"></div>
<div class="a" style="left:1281.10px;top:794.00px;width:8.20px;height:37.00px;background:linear-gradient(to bottom,#0fa0e6 0%,#0fa0e6 30%,rgba(15,160,230,0.02) 100%);"></div>
<div class="a" style="left:1181.1px;width:200px;text-align:center;top:838px;font-size:12px;line-height:15px;color:#5b6b84;">2</div>
<div class="a" style="left:1299.90px;top:797.50px;width:8.20px;height:33.50px;background:linear-gradient(to bottom,#f59c00 0%,#f59c00 30%,rgba(245,156,0,0.02) 100%);"></div>
<div class="a" style="left:1308.10px;top:767.90px;width:8.20px;height:63.10px;background:linear-gradient(to bottom,#0fa0e6 0%,#0fa0e6 30%,rgba(15,160,230,0.02) 100%);"></div>
<div class="a" style="left:1208.1px;width:200px;text-align:center;top:838px;font-size:12px;line-height:15px;color:#5b6b84;">3</div>
<div class="a" style="left:1326.90px;top:797.20px;width:8.20px;height:33.80px;background:linear-gradient(to bottom,#f59c00 0%,#f59c00 30%,rgba(245,156,0,0.02) 100%);"></div>
<div class="a" style="left:1335.10px;top:777.70px;width:8.20px;height:53.30px;background:linear-gradient(to bottom,#0fa0e6 0%,#0fa0e6 30%,rgba(15,160,230,0.02) 100%);"></div>
<div class="a" style="left:1235.1px;width:200px;text-align:center;top:838px;font-size:12px;line-height:15px;color:#5b6b84;">4</div>
<div class="a" style="left:1353.90px;top:793.10px;width:8.20px;height:37.90px;background:linear-gradient(to bottom,#f59c00 0%,#f59c00 30%,rgba(245,156,0,0.02) 100%);"></div>
<div class="a" style="left:1362.10px;top:770.40px;width:8.20px;height:60.60px;background:linear-gradient(to bottom,#0fa0e6 0%,#0fa0e6 30%,rgba(15,160,230,0.02) 100%);"></div>
<div class="a" style="left:1262.1px;width:200px;text-align:center;top:838px;font-size:12px;line-height:15px;color:#5b6b84;">5</div>
<div class="a" style="left:1380.90px;top:654.70px;width:8.20px;height:176.30px;background:linear-gradient(to bottom,#f59c00 0%,#f59c00 30%,rgba(245,156,0,0.02) 100%);"></div>
<div class="a" style="left:1389.10px;top:794.80px;width:8.20px;height:36.20px;background:linear-gradient(to bottom,#0fa0e6 0%,#0fa0e6 30%,rgba(15,160,230,0.02) 100%);"></div>
<div class="a" style="left:1289.1px;width:200px;text-align:center;top:838px;font-size:12px;line-height:15px;color:#5b6b84;">6</div>
<div class="a" style="left:1407.90px;top:783.10px;width:8.20px;height:47.90px;background:linear-gradient(to bottom,#f59c00 0%,#f59c00 30%,rgba(245,156,0,0.02) 100%);"></div>
<div class="a" style="left:1316.1px;width:200px;text-align:center;top:838px;font-size:12px;line-height:15px;color:#5b6b84;">7</div>
<div class="a" style="left:1434.90px;top:788.10px;width:8.20px;height:42.90px;background:linear-gradient(to bottom,#f59c00 0%,#f59c00 30%,rgba(245,156,0,0.02) 100%);"></div>
<div class="a" style="left:1343.1px;width:200px;text-align:center;top:838px;font-size:12px;line-height:15px;color:#5b6b84;">8</div>
<div class="a" style="left:1461.90px;top:787.90px;width:8.20px;height:43.10px;background:linear-gradient(to bottom,#f59c00 0%,#f59c00 30%,rgba(245,156,0,0.02) 100%);"></div>
<div class="a" style="left:1370.1px;width:200px;text-align:center;top:838px;font-size:12px;line-height:15px;color:#5b6b84;">9</div>
<div class="a" style="left:1488.90px;top:792.60px;width:8.20px;height:38.40px;background:linear-gradient(to bottom,#f59c00 0%,#f59c00 30%,rgba(245,156,0,0.02) 100%);"></div>
<div class="a" style="left:1397.1px;width:200px;text-align:center;top:838px;font-size:12px;line-height:15px;color:#5b6b84;">10</div>
<div class="a" style="left:1515.90px;top:792.60px;width:8.20px;height:38.40px;background:linear-gradient(to bottom,#f59c00 0%,#f59c00 30%,rgba(245,156,0,0.02) 100%);"></div>
<div class="a" style="left:1424.1px;width:200px;text-align:center;top:838px;font-size:12px;line-height:15px;color:#5b6b84;">11</div>
<div class="a" style="left:1542.90px;top:783.30px;width:8.20px;height:47.70px;background:linear-gradient(to bottom,#f59c00 0%,#f59c00 30%,rgba(245,156,0,0.02) 100%);"></div>
<div class="a" style="left:1451.1px;width:200px;text-align:center;top:838px;font-size:12px;line-height:15px;color:#5b6b84;">12月</div>
<!--/C5-->
<!--C6-->
<svg class="a" style="left:0;top:388px" width="22" height="124" viewBox="0 0 22 124"><path d="M0,2 C4,4 10,8 14,10 C18,12 19.6,16 19.6,22 L19.6,102 C19.6,108 18,112 14,114 C10,116 4,120 0,122 Z" fill="#0a63d6"/><path d="M9,58 L13,62.5 L9,67" fill="none" stroke="#22c2ff" stroke-width="1.4"/></svg>
<!--/C6-->
</body></html>
